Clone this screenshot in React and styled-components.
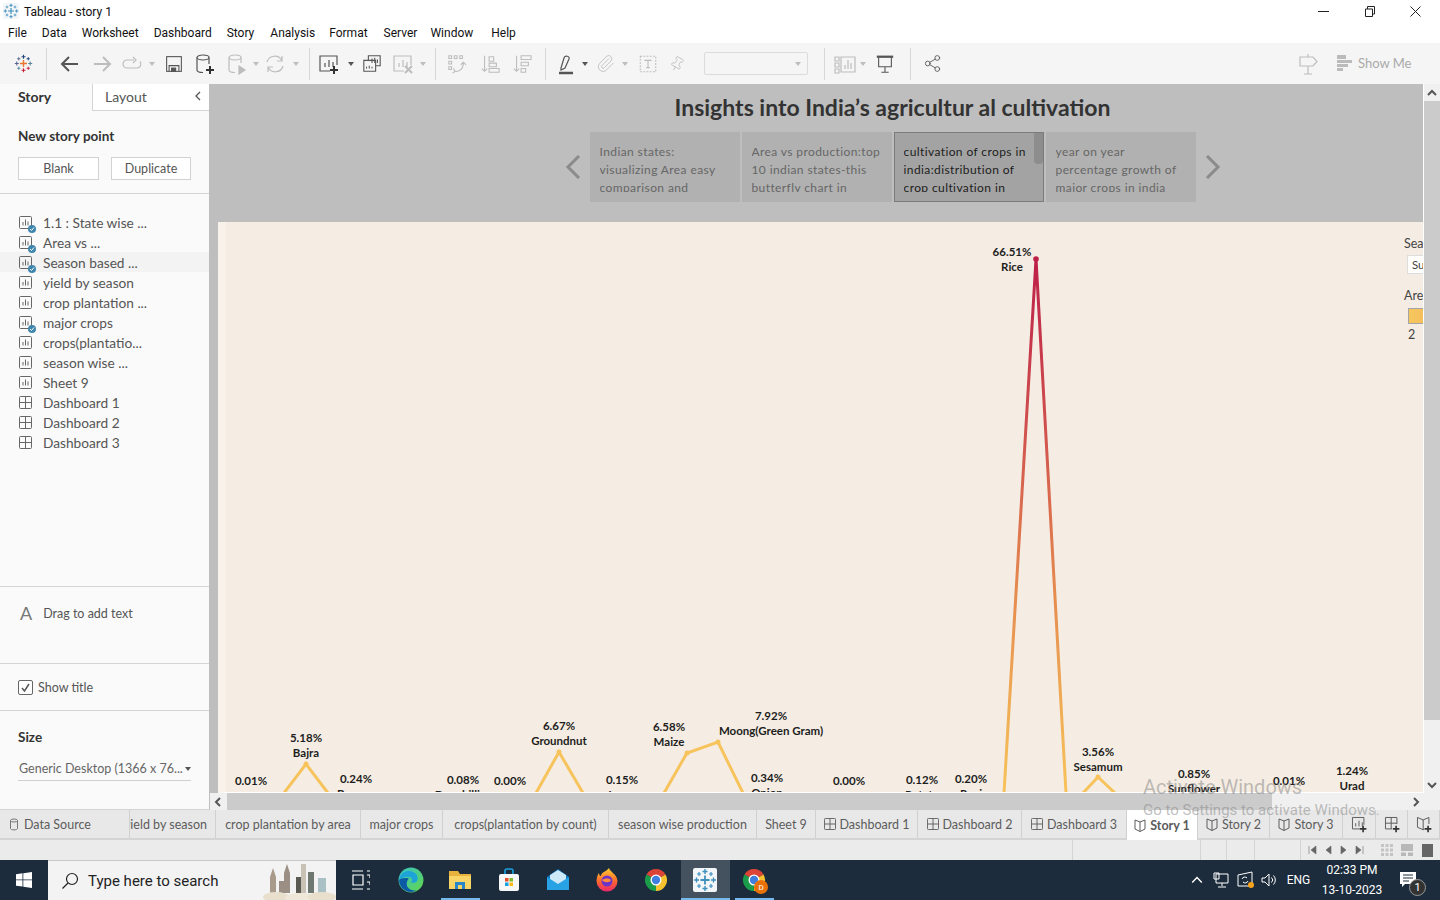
import React from 'react';
import styled, { createGlobalStyle } from 'styled-components';
import { Paperclip, Pin, Share2 } from 'lucide-react';

const GlobalStyle = createGlobalStyle`
  html, body { margin: 0; padding: 0; overflow: hidden; background: #fff; }
  * { box-sizing: border-box; }
`;

const UI_FONT = `Lato, "Open Sans", sans-serif`;
const OS_FONT = `Roboto, "Liberation Sans", sans-serif`;

/* ---------- window chrome ---------- */
const Page = styled.div`
  position: relative;
  width: 1440px;
  height: 900px;
  display: flex;
  flex-direction: column;
  overflow: hidden;
  font-family: ${UI_FONT};
  color: #444;
`;
const TitleBar = styled.div`
  height: 22px;
  display: flex;
  align-items: center;
  padding-left: 3px;
  background: #fff;
  font: 12px ${OS_FONT};
  color: #111;
`;
const TitleText = styled.span`
  margin-left: 5px;
  padding-top: 1px;
  flex: 1;
`;
const WinButton = styled.div`
  width: 46px;
  height: 22px;
  display: flex;
  align-items: center;
  justify-content: center;
  color: #222;
`;
const TitleEnd = styled.div`
  width: 2px;
`;
const MenuBar = styled.div`
  height: 21px;
  display: flex;
  align-items: center;
  background: #fff;
  padding-left: 8px;
  font: 12px ${OS_FONT};
  color: #111;
`;
const MenuItem = styled.span`
  margin-right: ${(p) => p.$gap}px;
`;

/* ---------- toolbar ---------- */
const Toolbar = styled.div`
  height: 41px;
  display: flex;
  align-items: center;
  background: #f5f5f5;
  padding-left: 8px;
`;
const Tool = styled.div`
  flex: none;
  width: ${(p) => p.$w}px;
  height: 24px;
  display: flex;
  align-items: center;
  justify-content: center;
  color: ${(p) => (p.$on ? '#555' : '#bdbdbd')};
`;
const ToolSep = styled.div`
  flex: none;
  width: 1px;
  height: 32px;
  background: #d8d8d8;
  margin-left: ${(p) => p.$l}px;
  margin-right: ${(p) => p.$r || 0}px;
`;
const Caret = styled.span`
  width: 0;
  height: 0;
  border-left: 3px solid transparent;
  border-right: 3px solid transparent;
  border-top: 4px solid ${(p) => (p.$on ? '#555' : '#bdbdbd')};
`;
const FontSelect = styled.div`
  flex: none;
  width: 104px;
  height: 23px;
  margin-left: 18px;
  border: 1px solid #dcdcdc;
  border-radius: 2px;
  display: flex;
  align-items: center;
  justify-content: flex-end;
  padding-right: 6px;
`;
const ToolSpacer = styled.div`
  flex: 1;
`;
const ShowMe = styled.div`
  width: 107px;
  display: flex;
  align-items: center;
  gap: 6px;
  padding: 0 0 1px 16px;
  font-size: 13px;
  color: #aaa;
  margin-right: 12px;
`;

/* ---------- main area ---------- */
const Main = styled.div`
  height: 726px;
  display: flex;
`;
const Sidebar = styled.aside`
  width: 210px;
  flex: none;
  display: flex;
  flex-direction: column;
  background: #fafafa;
  border-right: 1px solid #bebebe;
  border-bottom: 1px solid #d4d4d4;
`;
const SideTabs = styled.div`
  height: 27px;
  display: flex;
`;
const SideTab = styled.div`
  width: ${(p) => (p.$active ? '92px' : 'auto')};
  flex: ${(p) => (p.$active ? 'none' : 1)};
  display: flex;
  align-items: center;
  justify-content: space-between;
  padding: 0 5px 2px ${(p) => (p.$active ? 18 : 12)}px;
  font-size: 14px;
  font-weight: ${(p) => (p.$active ? 700 : 400)};
  color: ${(p) => (p.$active ? '#333' : '#555')};
  background: ${(p) => (p.$active ? '#fafafa' : '#fff')};
  border-left: ${(p) => (p.$active ? 'none' : '1px solid #d4d4d4')};
  border-bottom: ${(p) => (p.$active ? 'none' : '1px solid #d4d4d4')};
`;
const StoryPointBlock = styled.div`
  height: 83px;
  padding: 17px 18px 0;
  border-bottom: 1px solid #d4d4d4;
`;
const SideHeading = styled.div`
  font-size: 13.5px;
  font-weight: 700;
  color: #333;
`;
const ButtonRow = styled.div`
  display: flex;
  gap: 12px;
  margin-top: 13px;
`;
const SideButton = styled.div`
  height: 23px;
  width: ${(p) => p.$w}px;
  display: flex;
  align-items: center;
  justify-content: center;
  padding-bottom: 1px;
  background: #fff;
  border: 1px solid #d2d2d2;
  font-size: 12.5px;
  color: #555;
`;
const SheetList = styled.div`
  height: 393px;
  padding-top: 18px;
  border-bottom: 1px solid #d4d4d4;
`;
const SheetRow = styled.div`
  height: 20px;
  display: flex;
  align-items: center;
  gap: 11px;
  padding-left: 19px;
  font-size: 13.7px;
  color: #555;
  background: ${(p) => (p.$hover ? '#f3f3f3' : 'transparent')};
`;
const IconWrap = styled.span`
  position: relative;
  display: inline-flex;
  width: 13px;
  height: 13px;
  color: #666;
`;
const Badge = styled.span`
  position: absolute;
  right: -4px;
  bottom: -4px;
  width: 8px;
  height: 8px;
  border-radius: 50%;
  background: #3e86ad;
  display: flex;
  align-items: center;
  justify-content: center;
`;
const DragBlock = styled.div`
  height: 77px;
  padding: 17px 0 0 20px;
  display: flex;
  align-items: center;
  align-content: flex-start;
  flex-wrap: wrap;
  gap: 11px;
  font-size: 12.5px;
  color: #555;
  border-bottom: 1px solid #d4d4d4;
`;
const BigA = styled.span`
  font-size: 18px;
  line-height: 18px;
  color: #777;
`;
const TitleToggle = styled.div`
  height: 47px;
  display: flex;
  align-items: center;
  gap: 5px;
  padding: 0 0 0 18px;
  font-size: 12.5px;
  color: #555;
  border-bottom: 1px solid #d4d4d4;
`;
const CheckBox = styled.span`
  width: 15px;
  height: 15px;
  border: 1px solid #666;
  border-radius: 2px;
  background: #fff;
  display: flex;
  align-items: center;
  justify-content: center;
`;
const SizeBlock = styled.div`
  flex: 1;
  padding: 18px 18px 0;
`;
const SizeSelect = styled.div`
  margin-top: 12px;
  width: 173px;
  height: 24px;
  display: flex;
  align-items: center;
  justify-content: space-between;
  padding: 0 0 0 1px;
  font-size: 12.5px;
  color: #666;
  border-bottom: 1px solid #d0d0d0;
`;

/* ---------- story ---------- */
const StoryPanel = styled.section`
  flex: 1;
  display: flex;
  flex-direction: column;
  min-width: 0;
`;
const StoryBody = styled.div`
  height: 709px;
  display: flex;
`;
const Stage = styled.div`
  width: 1213px;
  flex: none;
  display: flex;
  flex-direction: column;
  background: #bebebe;
`;
const StoryHead = styled.div`
  height: 138px;
  display: flex;
  flex-direction: column;
  align-items: center;
  padding-left: 152px;
`;
const StoryTitle = styled.h1`
  margin: 9px 0 0;
  height: 39px;
  font: 700 23px/28px ${UI_FONT};
  color: #333;
`;
const Navigator = styled.div`
  display: flex;
  align-items: center;
`;
const NavArrow = styled.div`
  width: ${(p) => p.$w}px;
  display: flex;
  justify-content: ${(p) => p.$align};
  color: #8b8b8b;
`;
const StoryCards = styled.div`
  display: flex;
  gap: 2px;
`;
const StoryCard = styled.div`
  position: relative;
  width: 150px;
  height: 70px;
  padding: ${(p) => (p.$active ? 10 : 11)}px 8px 0 ${(p) => (p.$active ? 9 : 10)}px;
  background: ${(p) => (p.$active ? '#a3a3a3' : '#b1b1b1')};
  border: ${(p) => (p.$active ? '1px solid #7b7b7b' : 'none')};
  color: ${(p) => (p.$active ? '#1d1d1d' : '#666')};
  font-size: 12px;
  line-height: 18px;
  letter-spacing: 0.4px;
`;
const CardText = styled.div`
  height: 49px;
  overflow: hidden;
`;
const CardThumb = styled.div`
  position: absolute;
  top: 0;
  right: 0;
  width: 9px;
  height: 31px;
  border-radius: 0 0 4px 4px;
  background: #8d8d8d;
`;
const Canvas = styled.div`
  position: relative;
  margin-left: 8px;
  height: 571px;
  overflow: hidden;
  background: #f5ede3;
  border-left: 8px solid #f8f2ea;
  border-bottom: 1px solid #fff;
`;
const ChartSvg = styled.svg`
  display: block;
  font-family: ${UI_FONT};
  font-size: 11.5px;
  font-weight: 700;
  fill: #1d1d1d;
`;
const Legend = styled.div`
  position: absolute;
  left: 1178px;
  top: 14px;
  width: 30px;
  font-size: 12.5px;
  color: #444;
  white-space: nowrap;
`;
const LegendInput = styled.div`
  margin: 4px 0 14px 3px;
  width: 40px;
  height: 19px;
  padding: 2px 0 0 4px;
  background: #fff;
  border: 1px solid #ddd;
  font-size: 11.5px;
`;
const LegendSwatch = styled.div`
  margin: 5px 0 3px 4px;
  width: 30px;
  height: 16px;
  border: 1px solid #a5a5a5;
  background: linear-gradient(90deg, #f6c65e, #f3b95a);
`;
const LegendValue = styled.div`
  padding-left: 4px;
`;
const VScroll = styled.div`
  flex: 1;
  display: flex;
  flex-direction: column;
  background: #f0f0f0;
  border-left: 1px solid #fff;
`;
const ScrollCell = styled.div`
  height: ${(p) => p.$h}px;
  flex: ${(p) => (p.$grow ? 1 : 'none')};
  display: flex;
  align-items: center;
  justify-content: center;
  color: #555;
  background: ${(p) => (p.$thumb ? '#cbcbcb' : 'transparent')};
`;
const HScroll = styled.div`
  height: 17px;
  display: flex;
  background: #f0f0f0;
`;
const HCell = styled.div`
  width: ${(p) => p.$w}px;
  flex: ${(p) => (p.$grow ? 1 : 'none')};
  display: flex;
  align-items: center;
  justify-content: center;
  color: #555;
  background: ${(p) => (p.$thumb ? '#cbcbcb' : 'transparent')};
`;

/* ---------- tabs + status ---------- */
const TabStrip = styled.div`
  height: 30px;
  display: flex;
  background: #e8e8e8;
  border-bottom: 2px solid #d4d4d4;
`;
const SheetTab = styled.div`
  width: ${(p) => p.$w}px;
  flex: none;
  height: ${(p) => (p.$active ? 30 : 28)}px;
  display: flex;
  align-items: center;
  justify-content: ${(p) => p.$justify || 'center'};
  gap: 4px;
  overflow: hidden;
  white-space: nowrap;
  padding-right: ${(p) => p.$pr || 0}px;
  font-size: 12.5px;
  font-weight: ${(p) => (p.$active ? 700 : 400)};
  color: #5c5c5c;
  background: ${(p) => (p.$active ? '#fff' : 'transparent')};
  border-right: 1px solid #d0d0d0;
`;
const StatusBar = styled.div`
  height: 20px;
  display: flex;
  align-items: stretch;
  background: #ebebeb;
`;
const StatusCell = styled.div`
  width: ${(p) => p.$w}px;
  flex: none;
  border-right: ${(p) => (p.$plain ? 'none' : '1px solid #d4d4d4')};
  display: flex;
  align-items: center;
  justify-content: center;
  color: #6a6a6a;
`;

/* ---------- taskbar ---------- */
const Taskbar = styled.div`
  height: 40px;
  display: flex;
  align-items: stretch;
  background: #1c2c3c;
  color: #fff;
`;
const StartSlot = styled.div`
  width: 48px;
  display: flex;
  align-items: center;
  justify-content: center;
`;
const SearchBox = styled.div`
  width: 288px;
  display: flex;
  align-items: center;
  padding-left: 13px;
  gap: 9px;
  background: #f3f3f3;
  color: #222;
  font: 15px ${OS_FONT};
  border-top: 1px solid #c8c8c8;
`;
const SearchLabel = styled.span`
  flex: 1;
`;
const TaskSlot = styled.div`
  flex: none;
  width: ${(p) => p.$w}px;
  display: flex;
  align-items: center;
  justify-content: center;
  position: relative;
  background: ${(p) => (p.$current ? '#44525f' : 'transparent')};
  &::after {
    content: '';
    display: ${(p) => (p.$running ? 'block' : 'none')};
    position: absolute;
    bottom: 0;
    left: ${(p) => (p.$current ? 0 : 5)}px;
    right: ${(p) => (p.$current ? 0 : 5)}px;
    height: 2px;
    background: #76b9ed;
  }
`;
const TaskSpacer = styled.div`
  flex: 1;
`;
const TrayText = styled.div`
  width: ${(p) => p.$w}px;
  flex: none;
  display: flex;
  flex-direction: column;
  align-items: center;
  justify-content: center;
  font: 12px/20px ${OS_FONT};
  color: #fff;
`;
const NotifyCount = styled.span`
  position: absolute;
  left: 21px;
  top: 19px;
  width: 17px;
  height: 17px;
  border-radius: 50%;
  background: #333;
  border: 1px solid #999;
  font: 11px/15px ${OS_FONT};
  text-align: center;
`;
const ActivateNote = styled.div`
  position: absolute;
  left: 1143px;
  top: 775px;
  pointer-events: none;
  font-family: ${OS_FONT};
  color: rgba(130, 130, 130, 0.5);
`;
const ActivateTitle = styled.div`
  font-size: 20px;
  line-height: 25px;
`;
const ActivateSub = styled.div`
  font-size: 15px;
  line-height: 21px;
`;

/* ---------- icons ---------- */
const Ico = ({ s = 22, w = 1.2, children }) => (
  <svg width={s} height={s} viewBox="0 0 22 22" fill="none" stroke="currentColor" strokeWidth={w}>
    {children}
  </svg>
);

const TableauMark = ({ size = 18, colored, tile }) => {
  const c = colored
    ? ['#e8762d', '#1f447a', '#c72037', '#5b6591', '#59879b', '#5b6591', '#1f447a', '#59879b', '#c72037']
    : Array(9).fill('#3f8fbd');
  const crosses = [
    [12, 12, 4.5, 1.8], [12, 3.5, 2.5, 1.4], [12, 20.5, 2.5, 1.4], [3.5, 12, 2.5, 1.4], [20.5, 12, 2.5, 1.4],
    [6, 6, 2, 1.2], [18, 6, 2, 1.2], [6, 18, 2, 1.2], [18, 18, 2, 1.2],
  ];
  return (
    <svg width={size} height={size} viewBox="0 0 24 24">
      {tile && <rect x="0" y="0" width="24" height="24" rx="2" fill="#f2f6f9" />}
      {crosses.map(([x, y, a, t], i) => (
        <path key={i} d={`M${x - a} ${y}H${x + a}M${x} ${y - a}V${y + a}`} stroke={c[i]} strokeWidth={t} />
      ))}
    </svg>
  );
};

const Bars = () => <path d="M7 14V10M11 14V7M15 14V9" />;
const Plus = () => <path d="M16 13v8M12 17h8" stroke="#333" strokeWidth="2" />;

const SheetIcon = ({ s = 13 }) => (
  <svg width={s} height={s} viewBox="0 0 13 13" fill="none" stroke="currentColor">
    <rect x=".5" y=".5" width="12" height="12" rx="1" />
    <path d="M4 9.5V6M6.5 9.5V3.5M9 9.5V5.5" />
  </svg>
);
const DashIcon = ({ s = 13 }) => (
  <svg width={s} height={s} viewBox="0 0 13 13" fill="none" stroke="currentColor">
    <rect x=".5" y=".5" width="12" height="12" rx="1" />
    <path d="M6.5 .5v12M.5 6.5h12" />
  </svg>
);
const BookIcon = () => (
  <svg width="12" height="13" viewBox="0 0 12 13" fill="none" stroke="currentColor">
    <path d="M6 3 1 1v9l5 2.5 5-2.5V1zM6 3v9.500" />
  </svg>
);
const Check = () => (
  <svg width="6" height="6" viewBox="0 0 6 6" fill="none" stroke="#fff" strokeWidth="1">
    <path d="M1 3l1.500 1.500L5 1.500" />
  </svg>
);
const Chevron = ({ dir = 'left', s = 8, w = 1.6 }) => {
  const d = { left: 'M6 1 2 5l4 4', right: 'M4 1l4 4-4 4', up: 'M1 7l4-4 4 4', down: 'M1 3l4 4 4-4' }[dir];
  return (
    <svg width={s} height={s} viewBox="0 0 10 10" fill="none" stroke="currentColor" strokeWidth={w}>
      <path d={d} />
    </svg>
  );
};

const EdgeIcon = () => (
  <svg width="26" height="26" viewBox="0 0 24 24">
    <defs>
      <linearGradient id="edgeA" x1="0" y1="0" x2="1" y2="1">
        <stop offset="0" stopColor="#35c1c8" />
        <stop offset="1" stopColor="#64d84a" />
      </linearGradient>
    </defs>
    <circle cx="12" cy="12" r="11.500" fill="url(#edgeA)" />
    <path d="M1 12C2 5 8 3 12 4c4 1 7 4 6 8-1 3-5 3-6 2 2-2 1-5-3-5-5 0-8 3-8 3z" fill="#1ea3d9" />
    <path d="M1 12c0 6 5 11 11 11 2 0 4-.500 5-1.500-5 1-9-2-9-6 0-2 1-4 2-5-4-1-8 0-9 1.500z" fill="#0c5aa6" />
  </svg>
);
const FolderIcon = () => (
  <svg width="24" height="22" viewBox="0 0 24 22">
    <path d="M1 2h9l2 3h11v15H1z" fill="#e8b33c" />
    <path d="M1 7h22v13H1z" fill="#f9d568" />
    <path d="M7 13h10v7h-3v-4h-4v4H7z" fill="#2a86c8" />
  </svg>
);
const StoreIcon = () => (
  <svg width="22" height="24" viewBox="0 0 22 24">
    <path d="M7 6V3a2 2 0 0 1 2-2h4a2 2 0 0 1 2 2v3" fill="none" stroke="#1aa1e0" strokeWidth="1.600" />
    <rect x="1" y="6" width="20" height="17" rx="2" fill="#f7f7f7" />
    <rect x="7" y="10" width="3.500" height="3.500" fill="#ea4f2a" />
    <rect x="11.500" y="10" width="3.500" height="3.500" fill="#7db928" />
    <rect x="7" y="14.500" width="3.500" height="3.500" fill="#1aa1e0" />
    <rect x="11.500" y="14.500" width="3.500" height="3.500" fill="#fbb919" />
  </svg>
);
const MailIcon = () => (
  <svg width="24" height="24" viewBox="0 0 24 24">
    <path d="M12 1 23 9v13H1V9z" fill="#0f77c4" />
    <path d="M4 7 12 2l8 5v5l-8 5-8-5z" fill="#cde9f8" />
    <path d="M1 9l11 7 11-7v13H1z" fill="#27a2e4" />
  </svg>
);
const FirefoxIcon = () => (
  <svg width="24" height="26" viewBox="0 0 24 26">
    <defs>
      <linearGradient id="foxA" x1="0" y1="0" x2="0" y2="1">
        <stop offset="0" stopColor="#ffcc32" />
        <stop offset=".55" stopColor="#ff6a2c" />
        <stop offset="1" stopColor="#e9266c" />
      </linearGradient>
    </defs>
    <path d="M14 1c1 4 8 6 8.500 13a10.500 10.500 0 0 1-21 0C1.500 10 3 7 4 6c0 2 1 3 2 3 0-4 5-4 8-8z" fill="url(#foxA)" />
    <circle cx="12" cy="14" r="5.500" fill="#6b35c9" />
    <path d="M7 13c3-2 7-2 9 0-1 3-7 3-9 0z" fill="#ff8a3a" />
  </svg>
);
const ChromeIcon = () => (
  <svg width="24" height="24" viewBox="0 0 24 24">
    <path d="M12 12 2.470 6.500A11 11 0 0 1 21.530 6.500z" fill="#dc4437" />
    <path d="M12 12 21.530 6.500A11 11 0 0 1 12 23z" fill="#f5c12e" />
    <path d="M12 12 12 23A11 11 0 0 1 2.470 6.500z" fill="#1b9c4b" />
    <circle cx="12" cy="12" r="5.500" fill="#fff" />
    <circle cx="12" cy="12" r="4.200" fill="#3f7fe0" />
  </svg>
);
const SkylineArt = () => (
  <svg width="74" height="39" viewBox="0 0 74 39">
    <path d="M8 32V16l3-9 3 9v16z" fill="#a89b8c" />
    <path d="M22 32V12l3-9 3 9v20zM17 32V20h5v12z" fill="#9b8f85" />
    <path d="M34 32V16h7v16z" fill="#5b5a52" />
    <path d="M39 32V3h5v29z" fill="#c8c1b5" />
    <path d="M46 32V11h6v21z" fill="#6e7770" />
    <path d="M56 32V17h8v15z" fill="#a9c0c4" />
    <ellipse cx="14" cy="36" rx="13" ry="5" fill="#e8dfcd" />
    <ellipse cx="38" cy="37" rx="15" ry="5" fill="#efe7d8" />
    <ellipse cx="60" cy="36" rx="14" ry="5" fill="#e8dfcd" />
  </svg>
);

/* ---------- data ---------- */
const menus = [
  ['File', 15], ['Data', 15], ['Worksheet', 15], ['Dashboard', 15], ['Story', 16],
  ['Analysis', 14], ['Format', 16], ['Server', 13], ['Window', 18], ['Help', 0],
];
const sheets = [
  ['1.1 : State wise ...', 's', true], ['Area vs ...', 's', true], ['Season based ...', 's', true, true],
  ['yield by season', 's'], ['crop plantation ...', 's'], ['major crops', 's', true],
  ['crops(plantatio...', 's'], ['season wise ...', 's'], ['Sheet 9', 's'],
  ['Dashboard 1', 'd'], ['Dashboard 2', 'd'], ['Dashboard 3', 'd'],
];
const cards = [
  { text: 'Indian states: visualizing Area easy comparison and analysis' },
  { text: 'Area vs production:top 10 indian states-this butterfly chart in' },
  { text: 'cultivation of crops in india:distribution of crop cultivation in', active: true },
  { text: 'year on year percentage growth of major crops in india' },
];
const peaks = [
  { d: 'M284 793 306 764 328 793', pts: [[306, 764]] },
  { d: 'M536 793 559 752 583 793', pts: [[559, 752]] },
  { d: 'M664 793 687 753 718 742 743 793', pts: [[687, 753], [718, 742]] },
  { d: 'M1083 793 1098 777 1115 793', pts: [[1098, 777]] },
];
const chartLabels = [
  ['0.01%', 251, 785], ['5.18%', 306, 742], ['Bajra', 306, 757], ['0.24%', 356, 783], ['Banana', 356, 798],
  ['0.08%', 463, 784], ['Dry chillies', 463, 799], ['0.00%', 510, 785], ['6.67%', 559, 730], ['Groundnut', 559, 745],
  ['0.15%', 622, 784], ['Jowar', 622, 799], ['6.58%', 669, 731], ['Maize', 669, 746], ['7.92%', 771, 720],
  ['Moong(Green Gram)', 771, 735], ['0.34%', 767, 782], ['Onion', 767, 797], ['0.00%', 849, 785], ['0.12%', 922, 784],
  ['Potato', 922, 799], ['0.20%', 971, 783], ['Ragi', 971, 798], ['66.51%', 1012, 256], ['Rice', 1012, 271],
  ['3.56%', 1098, 756], ['Sesamum', 1098, 771], ['0.85%', 1194, 778], ['Sunflower', 1194, 793], ['0.01%', 1289, 785],
  ['1.24%', 1352, 775], ['Urad', 1352, 790],
];
const tabs = [
  { label: 'crop plantation by area', w: 145 }, { label: 'major crops', w: 82 },
  { label: 'crops(plantation by count)', w: 166 }, { label: 'season wise production', w: 148 },
  { label: 'Sheet 9', w: 59 }, { label: 'Dashboard 1', w: 102, icon: 'd' }, { label: 'Dashboard 2', w: 104, icon: 'd' },
  { label: 'Dashboard 3', w: 105, icon: 'd' }, { label: 'Story 1', w: 71, icon: 'b', active: true },
  { label: 'Story 2', w: 72, icon: 'b' }, { label: 'Story 3', w: 73, icon: 'b' },
];

const ToolbarRow = () => (
  <Toolbar>
    <Tool $w={30} $on><TableauMark size={19} colored /></Tool>
    <ToolSep $l={8} $r={8} />
    <Tool $w={30} $on><Ico w={2}><path d="M19 11H3M10 4l-7 7 7 7" /></Ico></Tool>
    <Tool $w={34}><Ico w={2}><path d="M3 11h16M12 4l7 7-7 7" /></Ico></Tool>
    <Tool $w={26}><Ico><path d="M13 7H6a4 4 0 0 0 0 8h10a4 4 0 0 0 3-6.500M12 4l3 3-3 3" /></Ico></Tool>
    <Tool $w={14}><Caret /></Tool>
    <Tool $w={30} $on><Ico w={1.3} s={18}><rect x="2" y="2" width="18" height="18" /><path d="M5 20v-7h12v7" /><rect x="8" y="16" width="5" height="4" fill="currentColor" /></Ico></Tool>
    <Tool $w={32} $on><Ico><ellipse cx="9" cy="4.500" rx="6" ry="2.500" /><path d="M3 4.500V17c0 1.500 3 2.500 6 2.500M15 4.500V11" /><Plus /></Ico></Tool>
    <Tool $w={31}><Ico><ellipse cx="9" cy="4.500" rx="6" ry="2.500" /><path d="M3 4.500V17c0 1.500 3 2.500 6 2.500M15 4.500V10" /><path d="M13 13l6 4-6 4z" fill="currentColor" /></Ico></Tool>
    <Tool $w={8}><Caret /></Tool>
    <Tool $w={30}><Ico><path d="M3 9a8 8 0 0 1 15-1M19 13a8 8 0 0 1-15 1M18 3v5h-5M4 19v-5h5" /></Ico></Tool>
    <Tool $w={12}><Caret /></Tool>
    <ToolSep $l={7} />
    <Tool $w={38} $on><Ico><path d="M12 18H2V3h17v9" /><Bars /><Plus /></Ico></Tool>
    <Tool $w={6}><Caret $on /></Tool>
    <Tool $w={36} $on><Ico s={20}><path d="M7 7V2h13v11h-5M2 7h13v12H2z" /><path d="M11 10v-5M14 10V4M17 10V6M5 16v-2M8 16v-3M11 16v-2" /></Ico></Tool>
    <Tool $w={26}><Ico><path d="M12 18H2V3h17v9" /><Bars /><path d="M13 13l7 7M20 13l-7 7" strokeWidth="2" /></Ico></Tool>
    <Tool $w={14}><Caret /></Tool>
    <ToolSep $l={5} />
    <Tool $w={42}><Ico s={20}><path d="M2 2h3v3H2zM8 2h3v3H8zM14 2h3v3h-3zM2 8h3v3H2zM2 14h3v3H2zM8 19c5 1 10-2 10-9M15 12l3-3 3 3M6 21l3-2-2-3" /></Ico></Tool>
    <Tool $w={24}><Ico s={20}><path d="M5 2v17M2 16l3 3 3-3M10 3h5v5h-5zM10 10h8v4h-8zM10 16h11v4H10z" /></Ico></Tool>
    <Tool $w={40}><Ico s={20}><path d="M5 2v17M2 16l3 3 3-3M10 2h11v4H10zM10 9h8v4h-8zM10 16h5v4h-5z" /></Ico></Tool>
    <ToolSep $l={3} $r={6} />
    <Tool $w={30} $on><Ico><path d="M5 15 8 5c1-3 6-2 5 1l-4 9-4 2z" /><path d="M3 20h14" strokeWidth="2.500" /></Ico></Tool>
    <Tool $w={6}><Caret $on /></Tool>
    <Tool $w={34}><Paperclip size={19} strokeWidth={1.100} /></Tool>
    <Tool $w={6}><Caret /></Tool>
    <Tool $w={40}><Ico s={20}><rect x="2.500" y="2.500" width="17" height="17" strokeDasharray="2 1.500" /><path d="M7 7h8M11 7v8M9 15h4" /></Ico></Tool>
    <Tool $w={18}><Pin size={16} strokeWidth={1.200} style={{ transform: 'rotate(30deg)' }} /></Tool>
    <FontSelect><Caret /></FontSelect>
    <ToolSep $l={16} $r={6} />
    <Tool $w={28}><Ico><path d="M1 4h4v4H1zM1 10h4v4H1zM1 16h4v4H1zM7 4h14v15H7z" /><path d="M11 16v-4M14 16V7M17 16v-6" /></Ico></Tool>
    <Tool $w={8}><Caret /></Tool>
    <Tool $w={36} $on><Ico s={20}><path d="M2 3h18" strokeWidth="2.500" /><path d="M4 4v10h14V4M11 14v6M7 20h8" /></Ico></Tool>
    <ToolSep $l={7} />
    <Tool $w={42} $on><Share2 size={19} strokeWidth={1.100} /></Tool>
    <ToolSpacer />
    <Tool $w={24}><Ico><path d="M10 1v3M10 13v8M6 21h8M2 4h13l4 4.500-4 4.500H2z" /></Ico></Tool>
    <ShowMe>
      <svg width="15" height="16" viewBox="0 0 15 16"><path d="M0 0h9v4H0zM0 5h15v3H0zM0 9h11v3H0zM0 13h6v3H0z" fill="#bbb" /></svg>
      Show Me
    </ShowMe>
  </Toolbar>
);

const Chart = () => (
  <ChartSvg width="1197" height="570" viewBox="226 222 1197 570">
    <defs>
      <linearGradient id="riceLine" gradientUnits="userSpaceOnUse" x1="0" y1="259" x2="0" y2="793">
        <stop offset="0" stopColor="#bd1f48" />
        <stop offset=".3" stopColor="#cf4d4d" />
        <stop offset=".62" stopColor="#e58a4f" />
        <stop offset=".85" stopColor="#f0ae55" />
        <stop offset="1" stopColor="#f7c35c" />
      </linearGradient>
    </defs>
    {peaks.map((p) => (
      <g key={p.d}>
        <path d={p.d} fill="none" stroke="#f7c35c" strokeWidth="3" />
        {p.pts.map(([x, y]) => <circle key={x} cx={x} cy={y} r="2.500" fill="#f7c35c" />)}
      </g>
    ))}
    <path d="M1004 793 1036 259 1066 793" fill="none" stroke="url(#riceLine)" strokeWidth="3" strokeLinejoin="bevel" />
    <circle cx="1036" cy="259" r="2.800" fill="#bd1f48" />
    {chartLabels.map(([text, x, y]) => (
      <text key={text + x} x={x} y={y} textAnchor="middle">{text}</text>
    ))}
  </ChartSvg>
);

const StoryArea = () => (
  <StoryPanel>
    <StoryBody>
      <Stage>
        <StoryHead>
          <StoryTitle>Insights into India’s agricultur al cultivation</StoryTitle>
          <Navigator>
            <NavArrow $w={25} $align="flex-start">
              <svg width="16" height="24" viewBox="0 0 16 24" fill="none" stroke="currentColor" strokeWidth="3"><path d="M14 1 3 12l11 11" /></svg>
            </NavArrow>
            <StoryCards>
              {cards.map((c) => (
                <StoryCard key={c.text} $active={c.active}>
                  <CardText>{c.text}</CardText>
                  {c.active && <CardThumb />}
                </StoryCard>
              ))}
            </StoryCards>
            <NavArrow $w={25} $align="flex-end">
              <svg width="16" height="24" viewBox="0 0 16 24" fill="none" stroke="currentColor" strokeWidth="3"><path d="M2 1l11 11L2 23" /></svg>
            </NavArrow>
          </Navigator>
        </StoryHead>
        <Canvas>
          <Chart />
          <Legend>
            Season
            <LegendInput>Summer</LegendInput>
            Area
            <LegendSwatch />
            <LegendValue>2</LegendValue>
          </Legend>
        </Canvas>
      </Stage>
      <VScroll>
        <ScrollCell $h={17}><Chevron dir="up" s={10} w={2} /></ScrollCell>
        <ScrollCell $h={619} $thumb />
        <ScrollCell $grow />
        <ScrollCell $h={17}><Chevron dir="down" s={10} w={2} /></ScrollCell>
      </VScroll>
    </StoryBody>
    <HScroll>
      <HCell $w={17}><Chevron dir="left" s={10} w={2} /></HCell>
      <HCell $w={1045} $thumb />
      <HCell $grow />
      <HCell $w={17}><Chevron dir="right" s={10} w={2} /></HCell>
      <HCell $w={17} />
    </HScroll>
  </StoryPanel>
);

const SidePanel = () => (
  <Sidebar>
    <SideTabs>
      <SideTab $active>Story</SideTab>
      <SideTab>Layout<Chevron dir="left" s={10} w={1.300} /></SideTab>
    </SideTabs>
    <StoryPointBlock>
      <SideHeading>New story point</SideHeading>
      <ButtonRow>
        <SideButton $w={81}>Blank</SideButton>
        <SideButton $w={80}>Duplicate</SideButton>
      </ButtonRow>
    </StoryPointBlock>
    <SheetList>
      {sheets.map(([name, kind, used, hover]) => (
        <SheetRow key={name} $hover={hover}>
          <IconWrap>
            {kind === 's' ? <SheetIcon /> : <DashIcon />}
            {used && <Badge><Check /></Badge>}
          </IconWrap>
          {name}
        </SheetRow>
      ))}
    </SheetList>
    <DragBlock><BigA>A</BigA>Drag to add text</DragBlock>
    <TitleToggle>
      <CheckBox>
        <svg width="11" height="11" viewBox="0 0 11 11" fill="none" stroke="#555" strokeWidth="1.500"><path d="M2 6l2.500 3L9 2" /></svg>
      </CheckBox>
      Show title
    </TitleToggle>
    <SizeBlock>
      <SideHeading>Size</SideHeading>
      <SizeSelect>Generic Desktop (1366 x 76...<Caret $on /></SizeSelect>
    </SizeBlock>
  </Sidebar>
);

const SheetTabs = () => (
  <TabStrip>
    <SheetTab $w={130} $justify="flex-start">
      <svg width="20" height="13" viewBox="0 0 20 13" fill="none" stroke="#777"><ellipse cx="14" cy="2.500" rx="3.500" ry="1.500" /><path d="M10.500 2.500v8c0 1.800 7 1.800 7 0v-8" /></svg>
      Data Source
    </SheetTab>
    <SheetTab $w={86} $justify="flex-end" $pr={8}>yield by season</SheetTab>
    {tabs.map((t) => (
      <SheetTab key={t.label} $w={t.w} $active={t.active}>
        {t.icon === 'd' && <DashIcon s={12} />}
        {t.icon === 'b' && <BookIcon />}
        {t.label}
      </SheetTab>
    ))}
    <SheetTab $w={33}><Ico s={18}><path d="M12 17H3V3h14v9" /><Bars /><Plus /></Ico></SheetTab>
    <SheetTab $w={32}><Ico s={18}><path d="M11 17H3V3h14v8M10 3v14M3 10h14" /><Plus /></Ico></SheetTab>
    <SheetTab $w={32}><Ico s={18}><path d="M10 6 3 3v12l7 3 2-1M10 6l7-3v8M10 6v12" /><Plus /></Ico></SheetTab>
  </TabStrip>
);

const StatusRow = () => (
  <StatusBar>
    <StatusCell $w={1073} />
    <StatusCell $w={128} />
    <StatusCell $w={26} />
    <StatusCell $w={28} />
    <StatusCell $w={46} />
    <StatusCell $w={3} $plain />
    {['M2 1v8M9 1 4 5l5 4z', 'M8 1 3 5l5 4z', 'M2 1l5 4-5 4z', 'M1 1l5 4-5 4zM8 1v8'].map((d) => (
      <StatusCell key={d} $w={16} $plain>
        <svg width="10" height="10" viewBox="0 0 10 10"><path d={d} fill="#666" stroke="#666" strokeWidth=".6" /></svg>
      </StatusCell>
    ))}
    <StatusCell $w={9} $plain />
    <StatusCell $w={20} $plain>
      <svg width="12" height="12" viewBox="0 0 12 12" fill="#c4c4c4"><path d="M0 0h3v3H0zM4.500 0h3v3h-3zM9 0h3v3H9zM0 4.500h3v3H0zM4.500 4.500h3v3h-3zM9 4.500h3v3H9zM0 9h3v3H0zM4.500 9h3v3h-3zM9 9h3v3H9z" /></svg>
    </StatusCell>
    <StatusCell $w={20} $plain>
      <svg width="12" height="12" viewBox="0 0 12 12" fill="#b8b8b8"><path d="M0 0h12v7H0zM0 8.500h5V12H0zM7 8.500h5V12H7z" /></svg>
    </StatusCell>
    <StatusCell $w={20} $plain>
      <svg width="11" height="13" viewBox="0 0 11 13"><path d="M0 0h11v13H0z" fill="#666" /></svg>
    </StatusCell>
  </StatusBar>
);

const TaskbarRow = () => (
  <Taskbar>
    <StartSlot>
      <svg width="16" height="16" viewBox="0 0 16 16" fill="#fff"><path d="M0 2.200 6.500 1.300v6.200H0zM7.300 1.200 16 0v7.500H7.300zM0 8.300h6.500v6.300L0 13.800zM7.300 8.300H16V16l-8.700-1.200z" /></svg>
    </StartSlot>
    <SearchBox>
      <svg width="18" height="18" viewBox="0 0 18 18" fill="none" stroke="#222" strokeWidth="1.200"><circle cx="11" cy="7" r="5.500" /><path d="M7 11l-5.500 5.500" /></svg>
      <SearchLabel>Type here to search</SearchLabel>
      <SkylineArt />
    </SearchBox>
    <TaskSlot $w={50.500}>
      <svg width="18" height="20" viewBox="0 0 18 20" fill="none" stroke="#fff" strokeWidth="1.200"><path d="M0 1h11M0 19h11M1 5h10v10H1zM15 1h3M15 5h3v3M15 12h3v3M15 19h3" /></svg>
    </TaskSlot>
    <TaskSlot $w={49}><EdgeIcon /></TaskSlot>
    <TaskSlot $w={49} $running><FolderIcon /></TaskSlot>
    <TaskSlot $w={49}><StoreIcon /></TaskSlot>
    <TaskSlot $w={49}><MailIcon /></TaskSlot>
    <TaskSlot $w={49}><FirefoxIcon /></TaskSlot>
    <TaskSlot $w={49}><ChromeIcon /></TaskSlot>
    <TaskSlot $w={49} $running $current><TableauMark size={24} tile /></TaskSlot>
    <TaskSlot $w={49} $running>
      <ChromeIcon />
      <svg width="14" height="14" viewBox="0 0 14 14" style={{ position: 'absolute', left: 24, top: 20 }}>
        <circle cx="7" cy="7" r="7" fill="#e8710a" />
        <text x="7" y="10" fontSize="8" fontFamily="Roboto" fill="#fff" textAnchor="middle">D</text>
      </svg>
    </TaskSlot>
    <TaskSpacer />
    <TaskSlot $w={24}><Chevron dir="up" s={12} w={1.200} /></TaskSlot>
    <TaskSlot $w={24}>
      <svg width="16" height="16" viewBox="0 0 16 16" fill="none" stroke="#fff"><path d="M3 2h12v9H3zM1 1h5v6H1zM9 11v3M5 15h8" /></svg>
    </TaskSlot>
    <TaskSlot $w={24}>
      <svg width="17" height="18" viewBox="0 0 17 18" fill="none" stroke="#fff"><path d="M1 4 15 1v14H1zM5 8a3 3 0 0 1 5-1M11 10a3 3 0 0 1-5 1" /><circle cx="14" cy="14" r="3" fill="#f7a31c" stroke="none" /></svg>
    </TaskSlot>
    <TaskSlot $w={24}>
      <svg width="16" height="16" viewBox="0 0 16 16" fill="none" stroke="#fff"><path d="M1 6h3l4-4v12l-4-4H1zM10.500 5.500a3.500 3.500 0 0 1 0 5M12.500 3.500a6.500 6.500 0 0 1 0 9" /></svg>
    </TaskSlot>
    <TrayText $w={35}>ENG</TrayText>
    <TrayText $w={72}><span>02:33 PM</span><span>13-10-2023</span></TrayText>
    <TaskSlot $w={40}>
      <svg width="18" height="16" viewBox="0 0 18 16"><path d="M1 0h16v12H6l-3 3v-3H1z" fill="#fff" /><path d="M4 3h10M4 6h10M4 9h6" stroke="#1c2c3c" /></svg>
      <NotifyCount>1</NotifyCount>
    </TaskSlot>
    <TaskSlot $w={12} />
  </Taskbar>
);

export default function App() {
  return (
    <Page>
      <GlobalStyle />
      <TitleBar>
        <TableauMark size={16} tile />
        <TitleText>Tableau - story 1</TitleText>
        <WinButton><svg width="11" height="11" viewBox="0 0 11 11" stroke="currentColor"><path d="M0 5.500h11" /></svg></WinButton>
        <WinButton><svg width="11" height="11" viewBox="0 0 11 11" fill="none" stroke="currentColor"><path d="M1.500 3h7v7.500h-7zM3.500 3V.500h7V8h-2" /></svg></WinButton>
        <WinButton><svg width="11" height="11" viewBox="0 0 11 11" stroke="currentColor"><path d="M.5.500l10 10M10.500.500l-10 10" /></svg></WinButton>
        <TitleEnd />
      </TitleBar>
      <MenuBar>
        {menus.map(([m, gap]) => <MenuItem key={m} $gap={gap}>{m}</MenuItem>)}
      </MenuBar>
      <ToolbarRow />
      <Main>
        <SidePanel />
        <StoryArea />
      </Main>
      <SheetTabs />
      <StatusRow />
      <TaskbarRow />
      <ActivateNote>
        <ActivateTitle>Activate Windows</ActivateTitle>
        <ActivateSub>Go to Settings to activate Windows.</ActivateSub>
      </ActivateNote>
    </Page>
  );
}
